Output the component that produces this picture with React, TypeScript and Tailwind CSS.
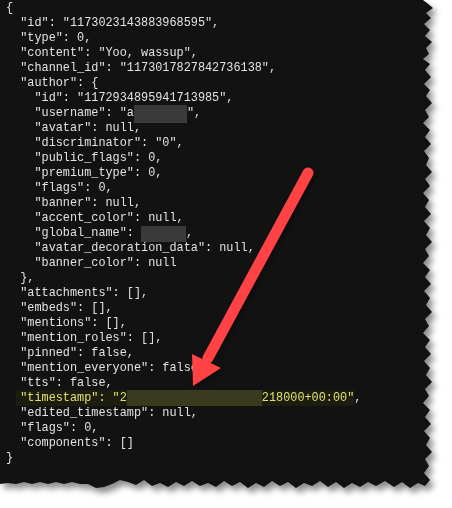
const lines: string[] = [
  "{",
  '  "id": "1173023143883968595",',
  '  "type": 0,',
  '  "content": "Yoo, wassup",',
  '  "channel_id": "1173017827842736138",',
  '  "author": {',
  '    "id": "1172934895941713985",',
  "USERNAME",
  '    "avatar": null,',
  '    "discriminator": "0",',
  '    "public_flags": 0,',
  '    "premium_type": 0,',
  '    "flags": 0,',
  '    "banner": null,',
  '    "accent_color": null,',
  "GLOBAL",
  '    "avatar_decoration_data": null,',
  '    "banner_color": null',
  "  },",
  '  "attachments": [],',
  '  "embeds": [],',
  '  "mentions": [],',
  '  "mention_roles": [],',
  '  "pinned": false,',
  '  "mention_everyone": false,',
  '  "tts": false,',
  "TIMESTAMP",
  '  "edited_timestamp": null,',
  '  "flags": 0,',
  '  "components": []',
  "}",
];

function Line({ text }: { text: string }) {
  if (text === "USERNAME") {
    return (
      <div className="h-[15px] whitespace-pre">
        {'    "username": "a'}
        <span className="inline-block w-[53px] h-[18px] -mt-[1px] -mb-[2px] align-top bg-[#3a3a3a]" />
        {'",'}
      </div>
    );
  }
  if (text === "GLOBAL") {
    return (
      <div className="h-[15px] whitespace-pre">
        {'    "global_name": '}
        <span className="inline-block w-[45px] h-[16px] -mb-[1px] align-top bg-[#3a3a3a]" />
        {","}
      </div>
    );
  }
  if (text === "TIMESTAMP") {
    return (
      <div className="h-[15px] whitespace-pre">
        {"  "}
        <span className="inline-block h-[16px] -mt-[1px] pt-[1px] -ml-[4px] pl-[4px] align-top bg-[#1c1c10] text-[#e2e26a]">
          {'"timestamp": "2'}
          <span className="inline-block w-[135px] h-[16px] -mt-[1px] align-top bg-[#3a3a1e]" />
          {'218000+00:00"'}
        </span>
        {","}
      </div>
    );
  }
  return <div className="h-[15px] whitespace-pre">{text}</div>;
}

export default function App() {
  return (
    <div className="relative w-[452px] h-[508px] bg-white overflow-hidden">
      {/* torn paper panel */}
      <div className="drop-shadow-[4px_5px_3px_rgba(0,0,0,0.45)]">
        <div className="w-[436px] h-[492px] bg-[#121212] pt-[1px] pl-[6px] text-[#e2e2e2] font-['Liberation_Mono',monospace] text-[11.85px] leading-[15px] [clip-path:polygon(0px_0px,423px_0px,427px_3px,433px_8px,426px_13px,431px_18px,424px_24px,430px_30px,425px_36px,432px_42px,426px_48px,429px_54px,423px_59px,430px_64px,425px_70px,431px_77px,424px_84px,430px_90px,426px_96px,432px_103px,425px_110px,429px_117px,423px_123px,430px_130px,425px_137px,431px_144px,424px_151px,429px_158px,426px_165px,432px_172px,425px_179px,430px_186px,423px_193px,429px_200px,425px_207px,431px_214px,424px_221px,430px_228px,426px_235px,432px_242px,425px_249px,429px_256px,423px_263px,430px_270px,425px_277px,431px_284px,424px_291px,430px_298px,426px_305px,432px_312px,425px_319px,429px_326px,423px_333px,430px_340px,425px_347px,431px_354px,424px_361px,430px_368px,426px_375px,432px_382px,425px_389px,429px_396px,423px_403px,430px_410px,425px_417px,431px_424px,424px_431px,430px_438px,426px_445px,432px_452px,425px_459px,429px_466px,424px_473px,430px_480px,425px_486px,418px_483px,410px_488px,402px_482px,394px_487px,385px_481px,376px_486px,368px_482px,360px_487px,352px_483px,344px_488px,336px_482px,328px_487px,320px_481px,312px_486px,304px_483px,296px_488px,288px_482px,280px_486px,272px_481px,264px_487px,256px_483px,248px_488px,240px_482px,232px_486px,224px_481px,216px_487px,208px_483px,200px_486px,192px_481px,184px_486px,176px_482px,168px_487px,160px_483px,152px_486px,144px_480px,136px_485px,128px_482px,120px_480px,112px_484px,104px_487px,96px_488px,88px_484px,80px_484px,72px_482px,64px_484px,56px_482px,48px_484px,40px_482px,32px_484px,24px_482px,16px_484px,8px_483px,0px_484px)]">
          {lines.map((l, i) => (
            <Line key={i} text={l} />
          ))}
        </div>
      </div>

      {/* red arrow */}
      <svg
        className="absolute inset-0 drop-shadow-[2px_2px_2px_rgba(0,0,0,0.35)]"
        width="452"
        height="508"
        viewBox="0 0 452 508"
      >
        <line x1="308" y1="173" x2="208" y2="358" stroke="#ff4244" strokeWidth="11" strokeLinecap="round" />
        <polygon points="193,386 192,354 221,368" fill="#ff4244" />
      </svg>
    </div>
  );
}
